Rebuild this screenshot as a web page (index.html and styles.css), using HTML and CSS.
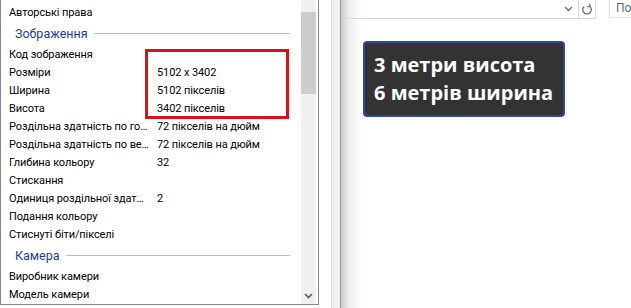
FILE: index.html
```html
<!DOCTYPE html>
<html lang="uk">
<head>
<meta charset="utf-8">
<title>Властивості</title>
<link rel="stylesheet" href="styles.css">
</head>
<body>
<div class="app">
  <div class="left">
    <div class="list">
      <div class="row"><span class="label">Авторські права</span><span class="value"></span></div>
      <div class="group"><span class="gtitle">Зображення</span><span class="gline"></span></div>
      <div class="row"><span class="label">Код зображення</span><span class="value"></span></div>
      <div class="row"><span class="label">Розміри</span><span class="value">5102 x 3402</span></div>
      <div class="row"><span class="label">Ширина</span><span class="value">5102 пікселів</span></div>
      <div class="row"><span class="label">Висота</span><span class="value">3402 пікселів</span></div>
      <div class="row"><span class="label">Роздільна здатність по горизонталі</span><span class="value">72 пікселів на дюйм</span></div>
      <div class="row"><span class="label">Роздільна здатність по вертикалі</span><span class="value">72 пікселів на дюйм</span></div>
      <div class="row"><span class="label">Глибина кольору</span><span class="value">32</span></div>
      <div class="row"><span class="label">Стискання</span><span class="value"></span></div>
      <div class="row"><span class="label">Одиниця роздільної здатності</span><span class="value">2</span></div>
      <div class="row"><span class="label">Подання кольору</span><span class="value"></span></div>
      <div class="row"><span class="label">Стиснуті біти/пікселі</span><span class="value"></span></div>
      <div class="group"><span class="gtitle">Камера</span><span class="gline"></span></div>
      <div class="row"><span class="label">Виробник камери</span><span class="value"></span></div>
      <div class="row"><span class="label">Модель камери</span><span class="value"></span></div>
    </div>
    <div class="scrollbar">
      <div class="track">
        <div class="thumb"></div>
      </div>
      <div class="arrow">
        <svg width="9" height="6" viewBox="0 0 9 6"><polyline points="1,1 4.5,4.5 8,1" fill="none" stroke="#606060" stroke-width="1.6"/></svg>
      </div>
    </div>
    <div class="highlight"></div>
  </div>
  <div class="divider">
    <div class="dwhite"></div>
    <div class="dstrip"></div>
  </div>
  <div class="right">
    <div class="toolbar">
      <div class="addr">
        <span class="chev"><svg width="9" height="6" viewBox="0 0 9 6"><polyline points="1,1 4.5,4.5 8,1" fill="none" stroke="#6d6d6d" stroke-width="1.4"/></svg></span>
        <span class="refresh"><svg width="12" height="13" viewBox="0 0 12 13"><path d="M8.6 3.2 A4.3 4.3 0 1 1 3.2 3.4" fill="none" stroke="#6d6d6d" stroke-width="1.3"/><polyline points="8.9,0.6 8.7,3.4 6,3.6" fill="none" stroke="#6d6d6d" stroke-width="1.3"/></svg></span>
      </div>
      <div class="search">По</div>
    </div>
    <div class="canvas">
      <div class="note">
        <div>3 метри висота</div>
        <div>6 метрів ширина</div>
      </div>
    </div>
  </div>
</div>
</body>
</html>
```
FILE: styles.css
```css
html, body {
  margin: 0;
  padding: 0;
  background: #ffffff;
}
body {
  width: 631px;
  height: 308px;
  overflow: hidden;
  font-family: Roboto, "Liberation Sans", Arial, sans-serif;
  font-size: 11px;
  color: #000;
}
.app {
  display: flex;
  height: 308px;
}
.left {
  position: relative;
  width: 317px;
  height: 304px;
  border-left: 1px solid #828790;
  border-right: 1px solid #828790;
  border-bottom: 1px solid #828790;
  display: flex;
  background: #fff;
  flex: none;
}
.list {
  width: 300px;
  padding-top: 3px;
  overflow: hidden;
}
.row {
  height: 18px;
  display: flex;
  align-items: center;
  white-space: nowrap;
  letter-spacing: -0.1px;
}
.label {
  width: 141px;
  padding-left: 8px;
  padding-right: 7px;
  overflow: hidden;
  text-overflow: ellipsis;
  flex: none;
}
.value {
  flex: none;
}
.group {
  height: 24px;
  display: flex;
  align-items: center;
  padding-left: 14px;
  padding-right: 11px;
  font-size: 12.5px;
}
.gtitle {
  color: #1f3a9e;
  flex: none;
}
.gline {
  flex: 1;
  height: 1px;
  background: #b3bad3;
  margin-left: 6px;
}
.scrollbar {
  width: 15px;
  margin-right: 2px;
  display: flex;
  flex-direction: column;
  background: #f0f0f0;
}
.track {
  flex: 1;
  padding-top: 12px;
}
.thumb {
  height: 82px;
  background: #cdcdcd;
}
.arrow {
  height: 16px;
  display: flex;
  align-items: center;
  justify-content: center;
}
.highlight {
  position: absolute;
  left: 144px;
  top: 49px;
  width: 138px;
  height: 64px;
  border: 3px solid #d9111b;
}
.divider {
  display: flex;
  flex: none;
  height: 308px;
}
.dwhite {
  width: 12px;
  border-right: 1px solid #dcdcdc;
  background: #fff;
}
.dstrip {
  width: 8px;
  background: #f0f0f0;
  border-right: 1px solid #9a9a9a;
}
.right {
  flex: 1;
  display: flex;
  flex-direction: column;
  background: linear-gradient(to right, #cbcbcb 0px, #ececec 8px, #ffffff 20px);
}
.toolbar {
  height: 19px;
  display: flex;
  flex: none;
}
.addr {
  width: 255px;
  border-bottom: 1px solid #d9d9d9;
  border-right: 1px solid #d9d9d9;
  display: flex;
  justify-content: flex-end;
  align-items: center;
  box-sizing: border-box;
}
.chev {
  width: 10px;
  display: flex;
  align-items: center;
  margin-right: 4px;
  height: 6px;
}
.refresh {
  width: 16px;
  height: 18px;
  border-left: 1px solid #d9d9d9;
  display: flex;
  align-items: center;
  justify-content: center;
}
.search {
  margin-left: 13px;
  flex: 1;
  border-left: 1px solid #d9d9d9;
  border-bottom: 1px solid #e6e6e6;
  padding-left: 6px;
  color: #6a6a6a;
  font-size: 12px;
  line-height: 17px;
  height: 18px;
  box-sizing: border-box;
}
.canvas {
  flex: 1;
  padding-top: 22px;
  padding-left: 22px;
}
.note {
  width: 181px;
  height: 72px;
  box-sizing: content-box;
  padding: 0 8px 0 9px;
  background: #333333;
  border: 2px solid #2a4d92;
  border-radius: 4px;
  color: #ffffff;
  font-family: "Open Sans", "Noto Sans", sans-serif;
  font-weight: 700;
  font-size: 20px;
  line-height: 28px;
  display: flex;
  flex-direction: column;
  justify-content: center;
  white-space: nowrap;
}
```
